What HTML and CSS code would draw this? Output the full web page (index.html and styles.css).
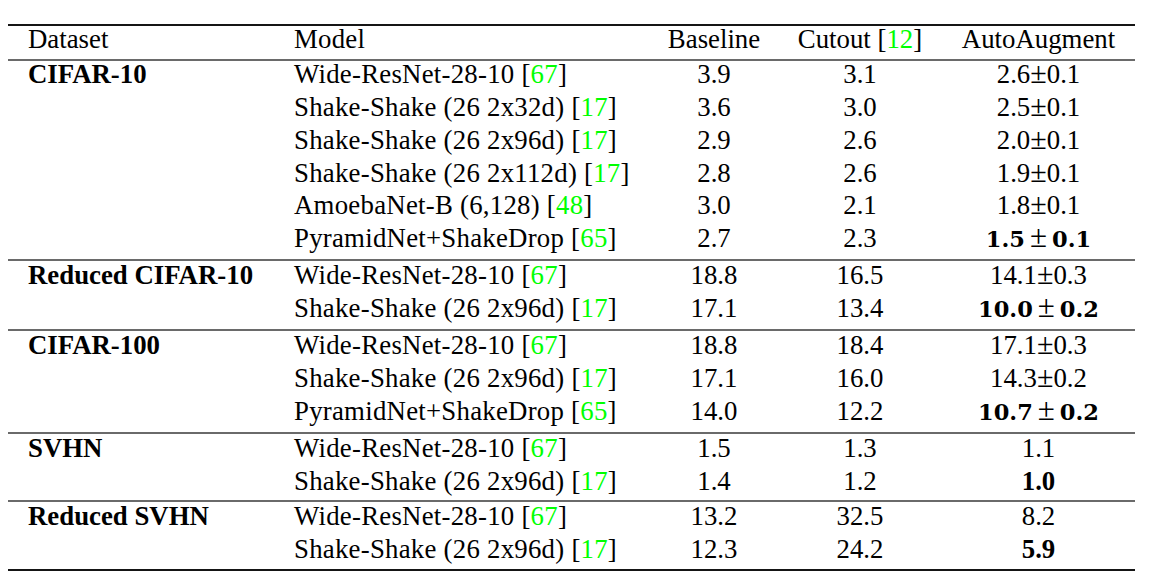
FILE: index.html
```html
<!DOCTYPE html>
<html>
<head>
<meta charset="utf-8">
<link rel="stylesheet" href="styles.css">
</head>
<body>
<table class="results">
  <colgroup>
    <col class="w-data"><col class="w-model"><col class="w-base"><col class="w-cut"><col class="w-auto">
  </colgroup>
  <thead>
    <tr>
      <th class="c-data">Dataset</th>
      <th class="c-model">Model</th>
      <th class="num">Baseline</th>
      <th class="num">Cutout [<span class="cite">12</span>]</th>
      <th class="num">AutoAugment</th>
    </tr>
  </thead>
  <tbody>
    <tr>
      <td class="c-data ds">CIFAR-10</td>
      <td class="c-model">Wide-ResNet-28-10 [<span class="cite">67</span>]</td>
      <td class="num">3.9</td><td class="num">3.1</td><td class="num">2.6<span class="pm">±</span>0.1</td>
    </tr>
    <tr>
      <td class="c-data"></td>
      <td class="c-model">Shake-Shake (26 2x32d) [<span class="cite">17</span>]</td>
      <td class="num">3.6</td><td class="num">3.0</td><td class="num">2.5<span class="pm">±</span>0.1</td>
    </tr>
    <tr>
      <td class="c-data"></td>
      <td class="c-model">Shake-Shake (26 2x96d) [<span class="cite">17</span>]</td>
      <td class="num">2.9</td><td class="num">2.6</td><td class="num">2.0<span class="pm">±</span>0.1</td>
    </tr>
    <tr>
      <td class="c-data"></td>
      <td class="c-model">Shake-Shake (26 2x112d) [<span class="cite">17</span>]</td>
      <td class="num">2.8</td><td class="num">2.6</td><td class="num">1.9<span class="pm">±</span>0.1</td>
    </tr>
    <tr>
      <td class="c-data"></td>
      <td class="c-model">AmoebaNet-B (6,128) [<span class="cite">48</span>]</td>
      <td class="num">3.0</td><td class="num">2.1</td><td class="num">1.8<span class="pm">±</span>0.1</td>
    </tr>
    <tr>
      <td class="c-data"></td>
      <td class="c-model">PyramidNet+ShakeDrop [<span class="cite">65</span>]</td>
      <td class="num">2.7</td><td class="num">2.3</td><td class="num"><span class="mathbf">1.5<span class="mpm">±</span>0.1</span></td>
    </tr>

    <tr class="grp">
      <td class="c-data ds">Reduced CIFAR-10</td>
      <td class="c-model">Wide-ResNet-28-10 [<span class="cite">67</span>]</td>
      <td class="num">18.8</td><td class="num">16.5</td><td class="num">14.1<span class="pm">±</span>0.3</td>
    </tr>
    <tr>
      <td class="c-data"></td>
      <td class="c-model">Shake-Shake (26 2x96d) [<span class="cite">17</span>]</td>
      <td class="num">17.1</td><td class="num">13.4</td><td class="num"><span class="mathbf">10.0<span class="mpm">±</span>0.2</span></td>
    </tr>

    <tr class="grp">
      <td class="c-data ds">CIFAR-100</td>
      <td class="c-model">Wide-ResNet-28-10 [<span class="cite">67</span>]</td>
      <td class="num">18.8</td><td class="num">18.4</td><td class="num">17.1<span class="pm">±</span>0.3</td>
    </tr>
    <tr>
      <td class="c-data"></td>
      <td class="c-model">Shake-Shake (26 2x96d) [<span class="cite">17</span>]</td>
      <td class="num">17.1</td><td class="num">16.0</td><td class="num">14.3<span class="pm">±</span>0.2</td>
    </tr>
    <tr>
      <td class="c-data"></td>
      <td class="c-model">PyramidNet+ShakeDrop [<span class="cite">65</span>]</td>
      <td class="num">14.0</td><td class="num">12.2</td><td class="num"><span class="mathbf">10.7<span class="mpm">±</span>0.2</span></td>
    </tr>

    <tr class="grp">
      <td class="c-data ds">SVHN</td>
      <td class="c-model">Wide-ResNet-28-10 [<span class="cite">67</span>]</td>
      <td class="num">1.5</td><td class="num">1.3</td><td class="num">1.1</td>
    </tr>
    <tr>
      <td class="c-data"></td>
      <td class="c-model">Shake-Shake (26 2x96d) [<span class="cite">17</span>]</td>
      <td class="num">1.4</td><td class="num">1.2</td><td class="num"><b>1.0</b></td>
    </tr>

    <tr class="grp">
      <td class="c-data ds">Reduced SVHN</td>
      <td class="c-model">Wide-ResNet-28-10 [<span class="cite">67</span>]</td>
      <td class="num">13.2</td><td class="num">32.5</td><td class="num">8.2</td>
    </tr>
    <tr class="last">
      <td class="c-data"></td>
      <td class="c-model">Shake-Shake (26 2x96d) [<span class="cite">17</span>]</td>
      <td class="num">12.3</td><td class="num">24.2</td><td class="num"><b>5.9</b></td>
    </tr>
  </tbody>
</table>
</body>
</html>
```

FILE: styles.css
```css
html, body {
  margin: 0;
  padding: 0;
  background: #ffffff;
}

body {
  font-family: "Liberation Serif", "Times New Roman", serif;
  color: #000000;
}

.results {
  margin: 24px 0 0 8px;
  width: 1127px;
  table-layout: fixed;
  border-collapse: separate;
  border-spacing: 0;
  font-size: 26.8px;
}

.w-data { width: 266px; }
.w-model { width: 376px; }
.w-base { width: 128px; }
.w-cut { width: 164px; }
.w-auto { width: 193px; }

.results th,
.results td {
  padding: 0 0 5.9px 0;
  line-height: 27px;
  font-weight: normal;
  white-space: nowrap;
  vertical-align: top;
}

.c-data,
.c-model {
  text-align: left;
  padding-left: 20px !important;
}

.c-model {
  letter-spacing: 0.25px;
}

.num {
  text-align: center;
}

.results thead th {
  border-top: 2px solid #151515;
  border-bottom: 2px solid #6a6a6a;
}

.results tr.grp td {
  border-top: 2px solid #6a6a6a;
  padding-top: 1px;
}

.results tr.last td {
  border-bottom: 2px solid #151515;
}

.ds {
  font-weight: bold !important;
}

.cite {
  color: #00ff00;
}

.pm {
  font-size: 1.12em;
  line-height: 0;
}

.mathbf {
  font-family: "DejaVu Serif", serif;
  font-weight: bold;
  font-size: 22.5px;
}

.mpm {
  font-family: "Liberation Serif", serif;
  font-weight: normal;
  font-size: 31px;
  line-height: 0;
  padding: 0 5px;
}
```
